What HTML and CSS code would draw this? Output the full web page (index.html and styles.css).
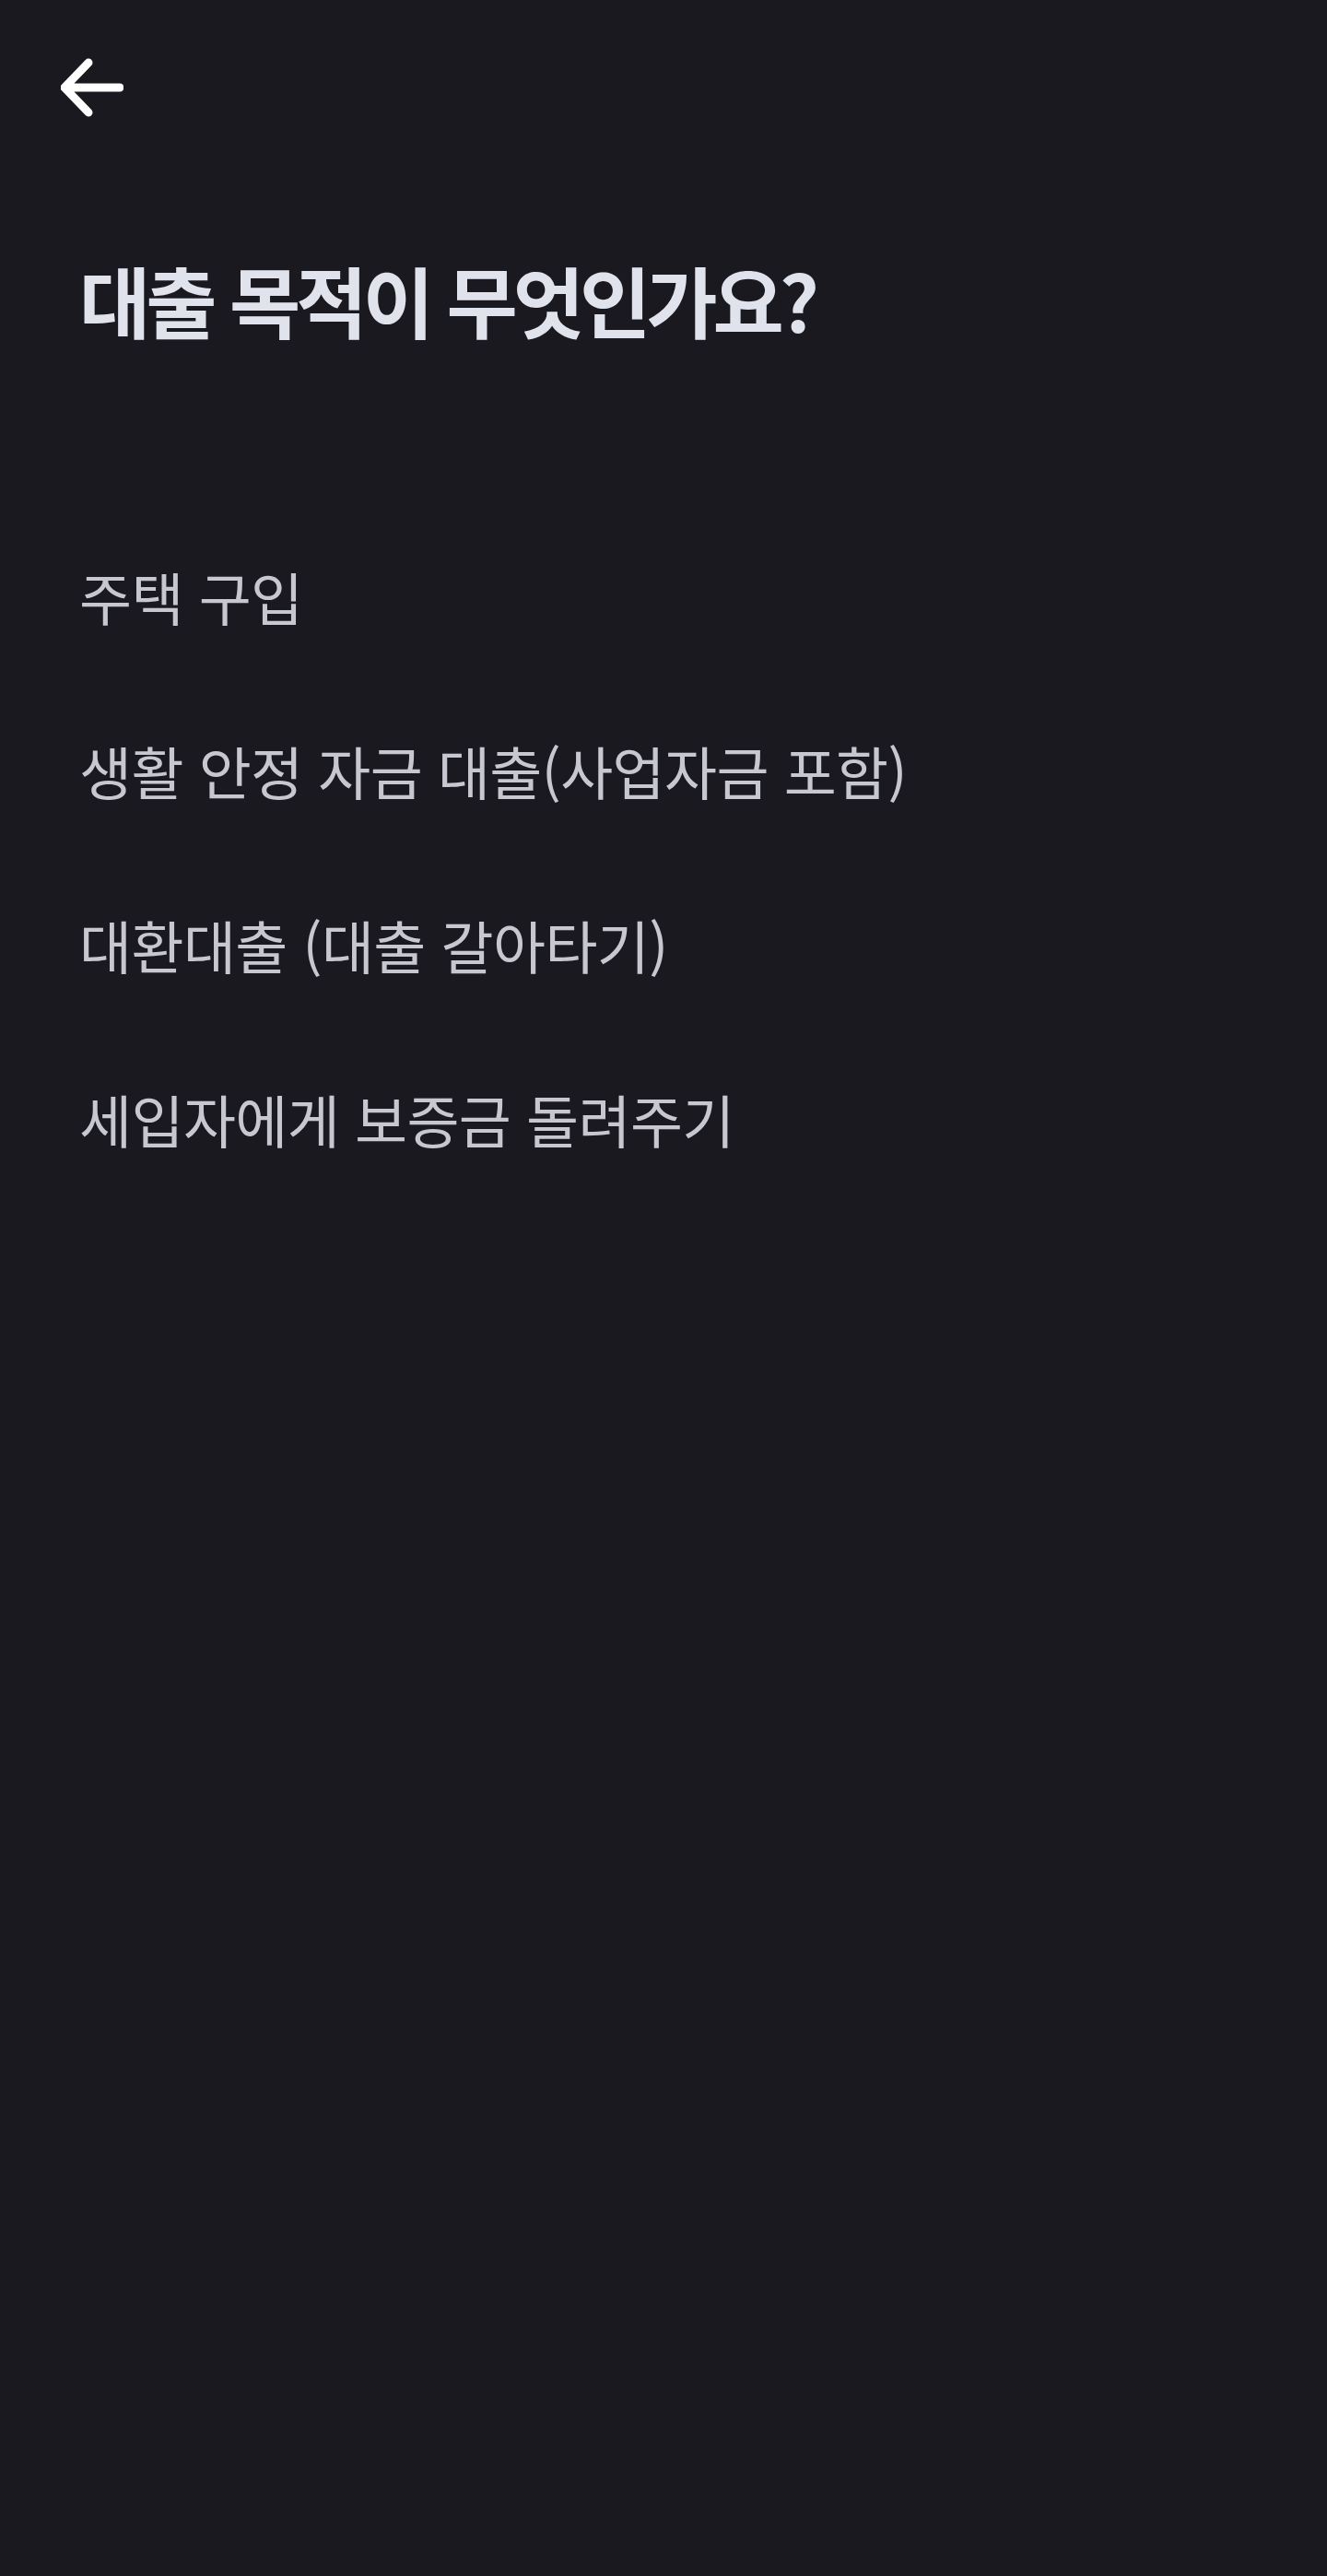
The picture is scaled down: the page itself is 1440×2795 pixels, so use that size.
FILE: index.html
```html
<!DOCTYPE html>
<html lang="ko">
<head>
  <meta charset="UTF-8">
  <title>대출 목적</title>
  <meta name="viewport" content="width=device-width, initial-scale=1.0">
  <link rel="stylesheet" href="styles.css">
</head>
<body>
  <div class="screen">
    <header class="topbar">
      <button class="back" aria-label="뒤로가기">
        <svg viewBox="0 0 68 64" width="68" height="64">
          <path d="M5 32 H64 M30 5 L4 32 L30 59" fill="none" stroke="#ffffff" stroke-width="9" stroke-linecap="round" stroke-linejoin="round"/>
        </svg>
      </button>
    </header>

    <h1 class="title">대출 목적이 무엇인가요?</h1>

    <ul class="options">
      <li>주택 구입</li>
      <li>생활 안정 자금 대출(사업자금 포함)</li>
      <li>대환대출 (대출 갈아타기)</li>
      <li>세입자에게 보증금 돌려주기</li>
    </ul>
  </div>
</body>
</html>
```

FILE: styles.css
```css
* { box-sizing: border-box; margin: 0; padding: 0; }
html, body {
  width: 100%;
  min-height: 100%;
  background-color: #1a191f;
  font-family: "Noto Sans CJK KR", "Noto Sans", sans-serif;
}
.screen {
  min-height: 2795px;
  padding: 0 86px;
}
.topbar {
  height: 275px;
  padding-top: 63px;
}
.back {
  display: block;
  margin-left: -20px;
  background: none;
  border: none;
  cursor: pointer;
}
.back svg { display: block; }
.title {
  font-size: 84px;
  font-weight: 700;
  letter-spacing: -5px;
  line-height: 1.2;
  color: #e0e2ec;
}
.options {
  list-style: none;
  margin-top: 234px;
  display: flex;
  flex-direction: column;
  gap: 114px;
}
.options li {
  font-size: 62px;
  font-weight: 400;
  letter-spacing: -0.6px;
  line-height: 75px;
  color: #c6c7cf;
  cursor: pointer;
}
```
